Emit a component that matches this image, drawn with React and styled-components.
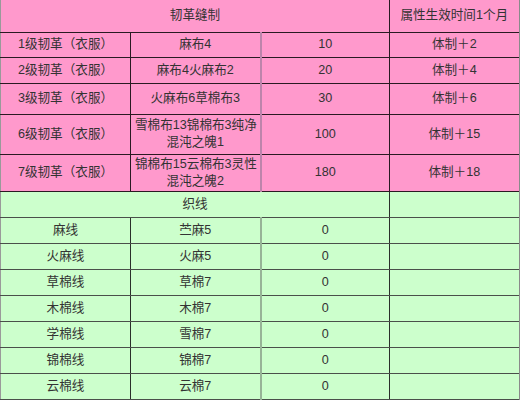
import React from "react";
import styled, { createGlobalStyle } from "styled-components";

const GlobalStyle = createGlobalStyle`
  html, body {
    margin: 0;
    padding: 0;
    background: #ffffff;
  }
  body {
    font-family: "Liberation Sans", "Noto Sans CJK SC", sans-serif;
  }
`;

const colors = {
  pink: "#ff99cc",
  green: "#ccffcc",
  pinkSoftLine: "#bd84ab",
  greenSoftLine: "#97b397",
};

const Sheet = styled.table`
  border-collapse: collapse;
  table-layout: fixed;
  width: 519px;
  border-left: 1px solid #9a9a9a;
  border-right: 2px solid #8a8a8a;
  color: #333333;
  font-size: 12.6px;
`;

const Row = styled.tr`
  height: ${(p) => p.$h}px;
  background: ${(p) => (p.$tone === "green" ? colors.green : colors.pink)};
`;

const Cell = styled.td`
  padding: 0 4px;
  text-align: center;
  vertical-align: middle;
  line-height: 17px;
  white-space: nowrap;
  border-top: 1px solid ${(p) => (p.$topSoft ? "#9c7f90" : "#2a1a22")};
  border-bottom: 1px solid ${(p) => (p.$tone === "green" ? "#4a4f4a" : "#2a1a22")};
  border-left: ${(p) =>
    p.$softLeft
      ? `2px solid ${p.$tone === "green" ? colors.greenSoftLine : colors.pinkSoftLine}`
      : `1px solid ${p.$tone === "green" ? "#2a2f2a" : "#2a1a22"}`};
  border-right: none;

  &:first-child {
    border-left: none;
  }
`;

const pinkRows = [
  { h: 25, name: "1级韧革（衣服）", mat: ["麻布4"], cost: "10", effect: "体制＋2" },
  { h: 26, name: "2级韧革（衣服）", mat: ["麻布4火麻布2"], cost: "20", effect: "体制＋4" },
  { h: 31, name: "3级韧革（衣服）", mat: ["火麻布6草棉布3"], cost: "30", effect: "体制＋6" },
  { h: 40, name: "6级韧革（衣服）", mat: ["雪棉布13锦棉布3纯净", "混沌之魄1"], cost: "100", effect: "体制＋15" },
  { h: 37, name: "7级韧革（衣服）", mat: ["锦棉布15云棉布3灵性", "混沌之魄2"], cost: "180", effect: "体制＋18" },
];

const greenRows = [
  { name: "麻线", mat: "苎麻5" },
  { name: "火麻线", mat: "火麻5" },
  { name: "草棉线", mat: "草棉7" },
  { name: "木棉线", mat: "木棉7" },
  { name: "学棉线", mat: "雪棉7" },
  { name: "锦棉线", mat: "锦棉7" },
  { name: "云棉线", mat: "云棉7" },
];

export default function App() {
  return (
    <>
      <GlobalStyle />
      <Sheet>
        <colgroup>
          <col style={{ width: 130 }} />
          <col style={{ width: 130 }} />
          <col style={{ width: 129 }} />
          <col style={{ width: 130 }} />
        </colgroup>
        <tbody>
          <Row $h={32}>
            <Cell colSpan={3} style={{ borderTop: "none" }}>
              韧革缝制
            </Cell>
            <Cell style={{ borderTop: "none" }}>属性生效时间1个月</Cell>
          </Row>
          {pinkRows.map((r) => (
            <Row key={r.name} $h={r.h}>
              <Cell>{r.name}</Cell>
              <Cell>
                {r.mat.map((line, i) => (
                  <React.Fragment key={i}>
                    {i > 0 && <br />}
                    {line}
                  </React.Fragment>
                ))}
              </Cell>
              <Cell $softLeft>{r.cost}</Cell>
              <Cell>{r.effect}</Cell>
            </Row>
          ))}
          <Row $h={26} $tone="green">
            <Cell colSpan={3} $tone="green" $topSoft>
              织线
            </Cell>
            <Cell $tone="green" $topSoft></Cell>
          </Row>
          {greenRows.map((r) => (
            <Row key={r.name} $h={26} $tone="green">
              <Cell $tone="green">{r.name}</Cell>
              <Cell $tone="green">{r.mat}</Cell>
              <Cell $tone="green" $softLeft>
                0
              </Cell>
              <Cell $tone="green"></Cell>
            </Row>
          ))}
        </tbody>
      </Sheet>
    </>
  );
}
